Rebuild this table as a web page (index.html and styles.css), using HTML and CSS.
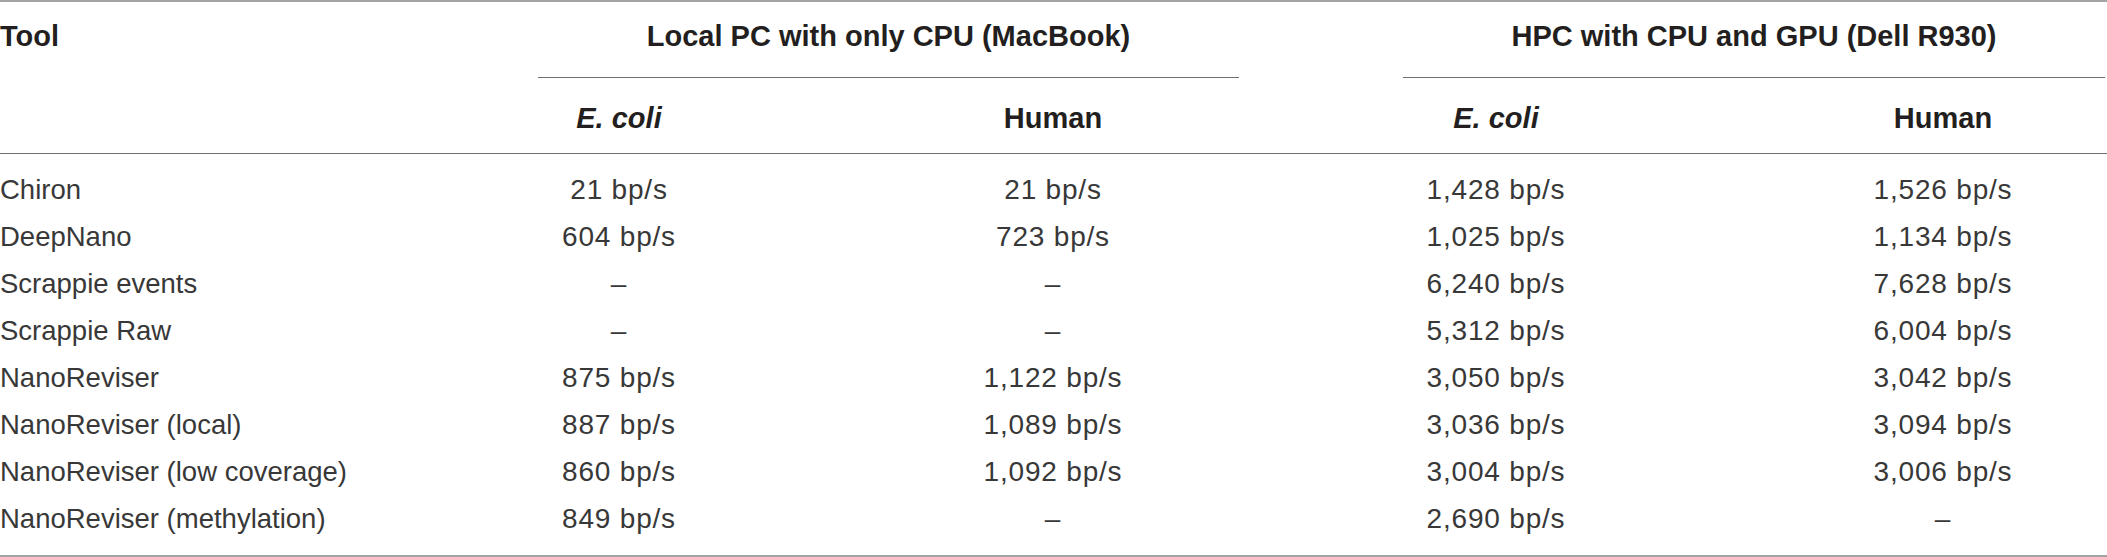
FILE: index.html
```html
<!DOCTYPE html>
<html lang="en">
<head>
<meta charset="utf-8">
<title>Basecalling speed</title>
<link rel="stylesheet" href="styles.css">
</head>
<body>
<table class="speed-table">
  <colgroup>
    <col class="c-tool">
    <col class="c-a">
    <col class="c-b">
    <col class="c-c">
    <col class="c-d">
  </colgroup>
  <thead>
    <tr>
      <th class="h-tool" rowspan="2">Tool</th>
      <th class="h-group" colspan="2"><div class="group-label group-local">Local PC with only CPU (MacBook)</div></th>
      <th class="h-group" colspan="2"><div class="group-label group-hpc">HPC with CPU and GPU (Dell R930)</div></th>
    </tr>
    <tr class="sub-row">
      <th class="h-sub"><em>E. coli</em></th>
      <th class="h-sub">Human</th>
      <th class="h-sub"><em>E. coli</em></th>
      <th class="h-sub last">Human</th>
    </tr>
  </thead>
  <tbody>
    <tr class="first">
      <td class="tool">Chiron</td><td class="num">21 bp/s</td><td class="num">21 bp/s</td><td class="num">1,428 bp/s</td><td class="num last">1,526 bp/s</td>
    </tr>
    <tr>
      <td class="tool">DeepNano</td><td class="num">604 bp/s</td><td class="num">723 bp/s</td><td class="num">1,025 bp/s</td><td class="num last">1,134 bp/s</td>
    </tr>
    <tr>
      <td class="tool">Scrappie events</td><td class="num">–</td><td class="num">–</td><td class="num">6,240 bp/s</td><td class="num last">7,628 bp/s</td>
    </tr>
    <tr>
      <td class="tool">Scrappie Raw</td><td class="num">–</td><td class="num">–</td><td class="num">5,312 bp/s</td><td class="num last">6,004 bp/s</td>
    </tr>
    <tr>
      <td class="tool">NanoReviser</td><td class="num">875 bp/s</td><td class="num">1,122 bp/s</td><td class="num">3,050 bp/s</td><td class="num last">3,042 bp/s</td>
    </tr>
    <tr>
      <td class="tool">NanoReviser (local)</td><td class="num">887 bp/s</td><td class="num">1,089 bp/s</td><td class="num">3,036 bp/s</td><td class="num last">3,094 bp/s</td>
    </tr>
    <tr>
      <td class="tool">NanoReviser (low coverage)</td><td class="num">860 bp/s</td><td class="num">1,092 bp/s</td><td class="num">3,004 bp/s</td><td class="num last">3,006 bp/s</td>
    </tr>
    <tr class="final">
      <td class="tool">NanoReviser (methylation)</td><td class="num">849 bp/s</td><td class="num">–</td><td class="num">2,690 bp/s</td><td class="num last">–</td>
    </tr>
  </tbody>
</table>
</body>
</html>
```

FILE: styles.css
```css
html, body {
  margin: 0;
  padding: 0;
  background: #ffffff;
}

.speed-table {
  width: 2107px;
  table-layout: fixed;
  border-collapse: separate;
  border-spacing: 0;
  border-top: 2px solid #a3a3a3;
  border-bottom: 2px solid #a3a3a3;
  font-family: "Liberation Sans", Arial, sans-serif;
  color: #231f20;
}

.c-tool { width: 400px; }
.c-a { width: 438px; }
.c-b { width: 430px; }
.c-c { width: 456px; }
.c-d { width: 383px; }

th {
  font-size: 29px;
  font-weight: bold;
  line-height: 40px;
  padding: 0;
  white-space: nowrap;
}

th em {
  font-style: italic;
}

.h-tool {
  text-align: left;
  vertical-align: top;
  padding-top: 14px;
  border-bottom: 1px solid #707070;
}

.h-group {
  vertical-align: top;
}

.group-label {
  text-align: center;
  padding: 14px 0 21px;
  border-bottom: 1px solid #707070;
}

.group-local {
  margin: 0 29px 0 138px;
}

.group-hpc {
  margin: 0 2px 0 135px;
}

.h-sub {
  text-align: center;
  padding: 20px 0 15px;
  border-bottom: 1px solid #707070;
}

.h-sub.last,
.num.last {
  padding-left: 55px;
}

td {
  padding: 0;
  line-height: 47px;
  white-space: nowrap;
  color: #383838;
}

.tool {
  font-size: 27.5px;
  text-align: left;
}

.num {
  font-size: 28px;
  letter-spacing: 0.8px;
  text-align: center;
}

tr.first td {
  padding-top: 12px;
}

tr.final td {
  padding-bottom: 13px;
}
```
